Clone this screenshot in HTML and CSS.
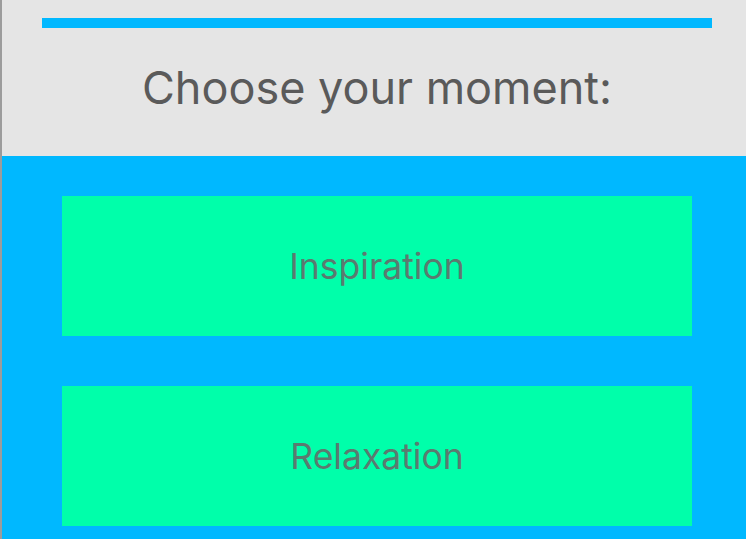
FILE: index.html
```html
<!DOCTYPE html>
<html>
<head>
<meta charset="utf-8">
<link rel="stylesheet" href="styles.css">
</head>
<body>
<div class="page">
  <header class="header">
    <div class="bar"></div>
    <h1 class="title">Choose your moment:</h1>
  </header>
  <main class="choices">
    <button class="choice">Inspiration</button>
    <button class="choice">Relaxation</button>
  </main>
</div>
</body>
</html>
```
FILE: styles.css
```css
html, body {
  margin: 0;
  padding: 0;
  height: 100%;
  overflow: hidden;
}
body {
  font-family: Inter, "Noto Sans", sans-serif;
  background: #00b8ff;
}
.page {
  display: flex;
  flex-direction: column;
  height: 100%;
  border-left: 2px solid #9c9c9c;
}
.header {
  background: #e5e5e5;
  height: 156px;
  box-sizing: border-box;
  padding-top: 18px;
  display: flex;
  flex-direction: column;
}
.bar {
  height: 10px;
  background: #00b8ff;
  margin: 0 34px 0 40px;
}
.title {
  margin: 0;
  padding-top: 33px;
  margin-left: 6px;
  text-align: center;
  font-weight: 400;
  font-size: 45px;
  line-height: 54px;
  color: #5a5a5a;
}
.choices {
  flex: 1;
  background: #00b8ff;
  display: flex;
  flex-direction: column;
  gap: 50px;
  padding: 40px 54px 0 60px;
}
.choice {
  height: 140px;
  border: none;
  background: #00ffaa;
  font-family: Inter, "Noto Sans", sans-serif;
  font-size: 35.5px;
  color: #5b7a70;
  padding: 0;
  cursor: pointer;
}
```
